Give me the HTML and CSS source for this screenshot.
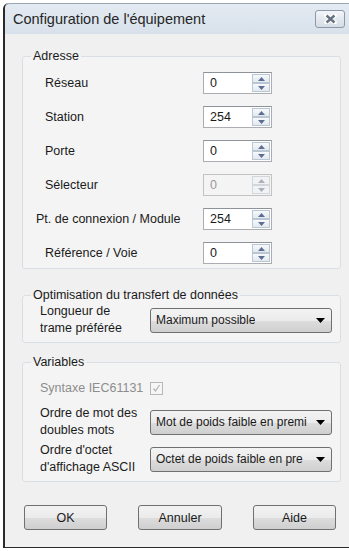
FILE: index.html
```html
<!DOCTYPE html>
<html lang="fr">
<head>
  <meta charset="UTF-8">
  <title>Configuration de l'équipement</title>
  <link rel="stylesheet" href="styles.css">
</head>
<body>
  <div class="window">
    <div class="titlebar">
      <span class="title">Configuration de l'équipement</span>
      <span class="close">
        <svg width="13" height="10" viewBox="0 0 13 10">
          <path d="M2.5 1.5 L10.5 8.5 M10.5 1.5 L2.5 8.5" stroke="#ffffff" stroke-width="4.5" stroke-linecap="round"/>
          <path d="M2.5 1.5 L10.5 8.5 M10.5 1.5 L2.5 8.5" stroke="#66727f" stroke-width="2.4"/>
        </svg>
      </span>
    </div>

    <div class="client">
      <fieldset class="group">
        <legend>Adresse</legend>
        <div class="address">
          <div class="row"><span class="label">Réseau</span>
            <div class="spin"><span class="val">0</span><span class="arrows"><i class="up"><svg width="7" height="4"><path d="M0 4 L3.5 0 L7 4Z" fill="#5b6f92"/></svg></i><i class="down"><svg width="7" height="4"><path d="M0 0 L3.5 4 L7 0Z" fill="#5b6f92"/></svg></i></span></div>
          </div>
          <div class="row"><span class="label">Station</span>
            <div class="spin"><span class="val">254</span><span class="arrows"><i class="up"><svg width="7" height="4"><path d="M0 4 L3.5 0 L7 4Z" fill="#5b6f92"/></svg></i><i class="down"><svg width="7" height="4"><path d="M0 0 L3.5 4 L7 0Z" fill="#5b6f92"/></svg></i></span></div>
          </div>
          <div class="row"><span class="label">Porte</span>
            <div class="spin"><span class="val">0</span><span class="arrows"><i class="up"><svg width="7" height="4"><path d="M0 4 L3.5 0 L7 4Z" fill="#5b6f92"/></svg></i><i class="down"><svg width="7" height="4"><path d="M0 0 L3.5 4 L7 0Z" fill="#5b6f92"/></svg></i></span></div>
          </div>
          <div class="row"><span class="label">Sélecteur</span>
            <div class="spin disabled"><span class="val">0</span><span class="arrows"><i class="up"><svg width="7" height="4"><path d="M0 4 L3.5 0 L7 4Z" fill="#a9b1bc"/></svg></i><i class="down"><svg width="7" height="4"><path d="M0 0 L3.5 4 L7 0Z" fill="#a9b1bc"/></svg></i></span></div>
          </div>
          <div class="row"><span class="label wide">Pt. de connexion / Module</span>
            <div class="spin"><span class="val">254</span><span class="arrows"><i class="up"><svg width="7" height="4"><path d="M0 4 L3.5 0 L7 4Z" fill="#5b6f92"/></svg></i><i class="down"><svg width="7" height="4"><path d="M0 0 L3.5 4 L7 0Z" fill="#5b6f92"/></svg></i></span></div>
          </div>
          <div class="row"><span class="label">Référence / Voie</span>
            <div class="spin"><span class="val">0</span><span class="arrows"><i class="up"><svg width="7" height="4"><path d="M0 4 L3.5 0 L7 4Z" fill="#5b6f92"/></svg></i><i class="down"><svg width="7" height="4"><path d="M0 0 L3.5 4 L7 0Z" fill="#5b6f92"/></svg></i></span></div>
          </div>
        </div>
      </fieldset>

      <fieldset class="group transfer">
        <legend>Optimisation du transfert de données</legend>
        <div class="options">
          <div class="opt-row">
            <span class="opt-label">Longueur de<br>trame préférée</span>
            <div class="combo"><span class="combo-text">Maximum possible</span><svg width="9" height="5"><path d="M0 0 L9 0 L4.5 5Z" fill="#000"/></svg></div>
          </div>
        </div>
      </fieldset>

      <fieldset class="group variables">
        <legend>Variables</legend>
        <div class="options">
          <div class="check-row">
            <span class="opt-label muted">Syntaxe IEC61131</span>
            <span class="checkbox"><svg width="9" height="9" viewBox="0 0 9 9"><path d="M1.5 4.5 L3.5 7 L7.5 1" stroke="#b4b4b4" stroke-width="1.3" fill="none"/></svg></span>
          </div>
          <div class="opt-row">
            <span class="opt-label">Ordre de mot des<br>doubles mots</span>
            <div class="combo"><span class="combo-text">Mot de poids faible en premi</span><svg width="9" height="5"><path d="M0 0 L9 0 L4.5 5Z" fill="#000"/></svg></div>
          </div>
          <div class="opt-row">
            <span class="opt-label">Ordre d'octet<br>d'affichage ASCII</span>
            <div class="combo"><span class="combo-text">Octet de poids faible en pre</span><svg width="9" height="5"><path d="M0 0 L9 0 L4.5 5Z" fill="#000"/></svg></div>
          </div>
        </div>
      </fieldset>

      <div class="buttons">
        <span class="btn">OK</span>
        <span class="btn wide">Annuler</span>
        <span class="btn">Aide</span>
      </div>
    </div>
  </div>
</body>
</html>
```

FILE: styles.css
```css
body {
  margin: 0;
  background: #ffffff;
  font-family: "Liberation Sans", Arial, sans-serif;
  font-size: 12.5px;
  color: #1a1a1a;
}
.window {
  margin: 3px 0 0 3px;
  width: 346px;
  border-left: 2px solid #2a2a2a;
  border-bottom: 1px solid #2a2a2a;
  border-top-left-radius: 6px;
  background: #f0f0f0;
}
.titlebar {
  height: 30px;
  display: flex;
  align-items: center;
  justify-content: space-between;
  padding: 0 6px 0 8px;
  background: linear-gradient(#e3eaf2, #d8e1eb);
  border-top: 1px solid #9aa6b3;
  border-top-left-radius: 5px;
}
.title { font-size: 14.5px; color: #262626; }
.close {
  width: 28px; height: 16px;
  display: flex; align-items: center; justify-content: center;
  border: 1px solid #8d99a7;
  border-radius: 3px;
  background: linear-gradient(#f3f6f9, #d5dce5);
}
.client {
  padding: 15px 10px 17px 17px;
  background: #f0f0f0;
}
.group {
  margin: 0;
  padding: 0;
  border: 1px solid #d9dfe4;
  border-radius: 3px;
  background: #f4f4f4;
}
legend {
  margin-left: 8px;
  padding: 0 2px;
  line-height: 14px;
  color: #1a1a1a;
}
.address {
  padding: 9px 0 4px 22px;
  display: flex; flex-direction: column; gap: 12px;
}
.row { display: flex; align-items: center; height: 22px; }
.label { width: 158px; }
.label.wide { margin-left: -9px; width: 167px; }
.spin {
  width: 67px; height: 20px;
  display: flex;
  border: 1px solid #abadb3;
  border-top-color: #8e9299;
  background: #ffffff;
}
.val { flex: 1; padding-left: 6px; line-height: 20px; }
.arrows { width: 18px; display: flex; flex-direction: column; padding: 1px 1px 1px 0; }
.arrows i {
  flex: 1;
  display: flex; align-items: center; justify-content: center;
  border: 1px solid #b9c6d3;
  background: linear-gradient(#f7f9fb, #e3e9ef);
}
.spin.disabled { background: #f4f4f4; border-color: #c2c2c2; }
.spin.disabled .val { color: #9a9a9a; }
.spin.disabled .arrows i { border-color: #d3d6da; background: #f1f2f3; }

.transfer { margin-top: 19px; }
.transfer .options { padding: 1px 0 5px 17px; }
.variables { margin-top: 12px; }
.variables .options {
  padding: 11px 0 5px 17px;
  display: flex; flex-direction: column; gap: 8px;
}
.variables .opt-row + .opt-row { margin-top: -5px; }
.opt-row { display: flex; align-items: center; height: 34px; }
.check-row { display: flex; align-items: center; height: 17px; }
.opt-label { width: 110px; line-height: 17px; }
.muted { color: #8d8d8d; }
.checkbox {
  width: 11px; height: 11px;
  display: flex; align-items: center; justify-content: center;
  border: 1px solid #b8b8b8;
  background: #f6f6f6;
}
.combo {
  box-sizing: border-box;
  width: 182px; height: 25px;
  display: flex; align-items: center; justify-content: space-between;
  gap: 6px;
  padding: 0 6px 0 5px;
  border: 1px solid #707070;
  border-radius: 3px;
  font-size: 12px;
  background: linear-gradient(#f3f3f3 0%, #ebebeb 50%, #dddddd 51%, #cfcfcf 100%);
}
.combo-text { white-space: nowrap; overflow: hidden; }
.combo svg { flex: none; }
.buttons {
  margin-top: 23px;
  padding-left: 2px;
  display: flex; gap: 31px;
}
.btn {
  width: 81px; height: 23px;
  display: flex; align-items: center; justify-content: center;
  border: 1px solid #707070;
  border-radius: 3px;
  background: linear-gradient(#f2f2f2 0%, #ebebeb 50%, #dddddd 51%, #cfcfcf 100%);
}
.btn.wide { width: 82px; }
```
